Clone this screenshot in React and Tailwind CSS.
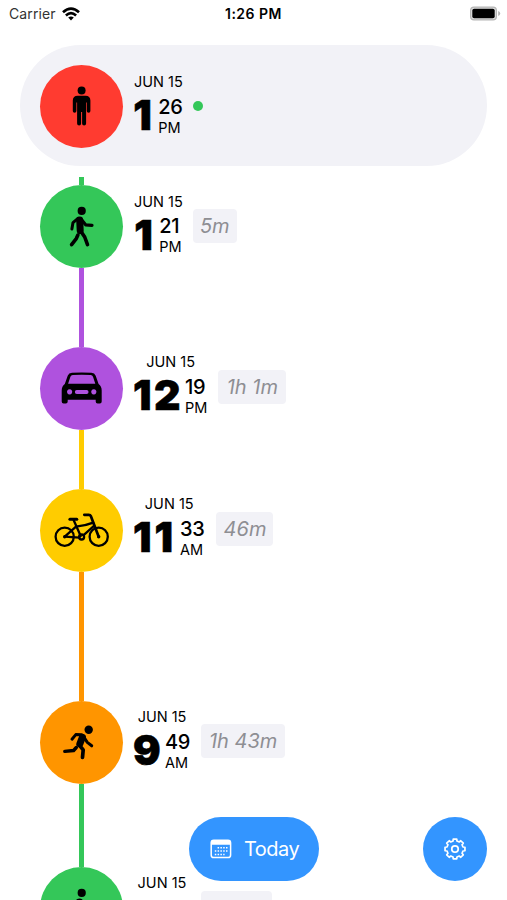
import React from "react";

const stroke = {
  fill: "none",
  stroke: "black",
  strokeLinecap: "round",
  strokeLinejoin: "round",
};

function StandIcon() {
  return (
    <svg viewBox="0 0 83 83" className="w-full h-full">
      <circle cx="41.6" cy="25.5" r="4" />
      <path d="M37.6 30.8h8c3 0 4.8 1.8 4.8 4.6v10.500a1.800 1.800 0 0 1-3.600 0V37.600h-.7v21a2 2 0 0 1-4 0V47h-1v11.600a2 2 0 0 1-4 0v-21h-.7v8.300a1.800 1.800 0 0 1-3.600 0V35.400c0-2.800 1.800-4.600 4.800-4.600z" />
    </svg>
  );
}

function WalkIcon() {
  return (
    <svg viewBox="0 0 83 83" className="w-full h-full">
      <circle cx="41.7" cy="25.9" r="4.100" />
      <path d="M39.700 35L40.200 45.500" {...stroke} strokeWidth="7" />
      <path d="M38 33.400L33 37.600L31.900 44" {...stroke} strokeWidth="3" />
      <path d="M41.800 35L45.600 39.800L52 40.400" {...stroke} strokeWidth="3.200" />
      <path d="M37.900 50L36.300 53.600L31.600 59.700" {...stroke} strokeWidth="3.600" />
      <path d="M41 46.500L44.700 52L47.500 59.600" {...stroke} strokeWidth="3.600" />
    </svg>
  );
}

function CarIcon() {
  return (
    <svg viewBox="0 0 83 83" className="w-full h-full">
      <path
        fillRule="evenodd"
        d="M32 25.700Q41.700 25.100 51.400 25.700Q54.600 25.900 55.700 28.700L58.600 37Q61.700 39.400 61.700 43.500V54.600Q61.700 56.500 59.800 56.500H57.600Q55.700 56.500 55.700 54.600V52.800H27.700V54.600Q27.700 56.500 25.800 56.500H23.600Q21.700 56.500 21.700 54.600V43.500Q21.700 39.400 24.800 37L27.700 28.700Q28.800 25.900 32 25.700ZM32.800 28Q31 28.200 30.400 29.800L28.100 36.700H55.300L53 29.800Q52.400 28.200 50.600 28Q41.700 27.500 32.800 28ZM29.600 42.300a2.600 2.600 0 1 0 .01 0ZM53.800 42.300a2.600 2.600 0 1 0 .01 0ZM36.800 43a1.950 1.950 0 0 0 0 3.900H46.600a1.950 1.950 0 0 0 0-3.900Z"
      />
    </svg>
  );
}

function BikeIcon() {
  return (
    <svg viewBox="0 0 83 83" className="w-full h-full">
      <g {...stroke} strokeWidth="2.300">
        <circle cx="24.700" cy="47.700" r="9.100" />
        <circle cx="58.700" cy="47.700" r="9.100" />
        <path d="M29.900 30.300H36.800" strokeWidth="3" />
        <path d="M33.600 31L40.700 47" />
        <path d="M44.300 25.800H48.800Q50.300 25.800 50.800 27L58.700 47.700" strokeWidth="2.700" />
        <path d="M36 37.700Q45 36.800 53.200 33.600M54 36.800L43.600 46.200M36 37.700L24.700 47.700L39.500 48.700" />
        <circle cx="41.600" cy="48" r="2.500" />
      </g>
      <circle cx="24.700" cy="47.700" r="1.700" />
      <circle cx="58.700" cy="47.700" r="1.700" />
    </svg>
  );
}

function RunIcon() {
  return (
    <svg viewBox="0 0 83 83" className="w-full h-full">
      <circle cx="48.700" cy="28.700" r="4.200" />
      <path d="M42.400 36.300L39.800 43" {...stroke} strokeWidth="7" />
      <path d="M41.700 33.700L35.800 33.600L32 38.200" {...stroke} strokeWidth="3" />
      <path d="M44.500 37L47.300 41.400L51.700 44.800" {...stroke} strokeWidth="3" />
      <path d="M39.500 44.300L43.200 48.800L42.500 56.300" {...stroke} strokeWidth="3.700" />
      <path d="M36.300 46.500L33.600 49.500L24.800 50.400" {...stroke} strokeWidth="3.400" />
    </svg>
  );
}

function CalendarIcon() {
  return (
    <svg viewBox="0 0 22 20" className="w-[22px] h-5">
      <rect x="1.200" y="1.200" width="19.400" height="17.400" rx="2.600" fill="none" stroke="white" strokeWidth="1.500" />
      <path d="M1 5.800V3.500Q1 1 3.500 1H18.300Q20.800 1 20.800 3.500V5.800Z" fill="white" />
      <g fill="none" stroke="white" strokeWidth="1.500" strokeDasharray="1.500 1.300">
        <path d="M7.600 8.700H17.500" />
        <path d="M4.800 12.100H17.500" />
        <path d="M4.800 15.500H14.600" />
      </g>
    </svg>
  );
}

// eight teeth, four corners each
const gearPoints = Array.from({ length: 32 }, (_, i) => {
  const tooth = Math.floor(i / 4) * 45;
  const [offset, r] = [[-14, 8.2], [-10, 10.1], [10, 10.1], [14, 8.2]][i % 4];
  const a = ((tooth + offset) * Math.PI) / 180;
  return `${(Math.sin(a) * r).toFixed(2)},${(-Math.cos(a) * r).toFixed(2)}`;
}).join(" ");

function GearIcon() {
  return (
    <svg viewBox="-12 -12 24 24" className="w-6 h-6">
      <g fill="none" stroke="white" strokeWidth="1.700" strokeLinejoin="round">
        <polygon points={gearPoints} />
        <circle r="3.200" strokeWidth="1.800" />
      </g>
    </svg>
  );
}

const current = {
  icon: StandIcon,
  color: "bg-[#ff3b30]",
  pad: "pt-[9px]",
  hour: "1",
  minute: "26",
  period: "PM",
};

const entries = [
  { icon: WalkIcon, color: "bg-[#34c759]", line: "h-2 bg-[#34c759]", pad: "pt-[8.5px]", hour: "1", minute: "21", period: "PM", duration: "5m", badge: "-ml-px mt-6 w-11" },
  { icon: CarIcon, color: "bg-[#af52de]", line: "h-[79px] bg-[#af52de]", pad: "pt-[7px]", hour: "12", minute: "19", period: "PM", duration: "1h 1m", badge: "mt-[22.5px] w-[68px]" },
  { icon: BikeIcon, color: "bg-[#ffcc00]", line: "h-[59px] bg-[#ffcc00]", pad: "pt-[7px]", hour: "11", minute: "33", period: "AM", duration: "46m", badge: "ml-px mt-[23px] w-[57px]" },
  { icon: RunIcon, color: "bg-[#ff9500]", line: "h-[129px] bg-[#ff9500]", pad: "pt-2", hour: "9", minute: "49", period: "AM", duration: "1h 43m", badge: "mt-[23px] w-[84px]" },
  { icon: WalkIcon, color: "bg-[#34c759]", line: "h-[83px] bg-[#34c759]", pad: "pt-2", badge: "mt-6 w-[71px]" },
];

const hourWidths = {
  1: "w-[20px] tracking-[1px]",
  12: "w-[47px] tracking-[2.5px]",
  11: "w-[42px] tracking-[3px]",
  9: "w-[27px] tracking-[1px]",
};

function Entry({ entry, children }) {
  const Icon = entry.icon;
  return (
    <div className="flex h-[83px]">
      <div className={`w-[83px] h-[83px] shrink-0 rounded-full ${entry.color}`}>
        <Icon />
      </div>
      <div className={`ml-[11px] mr-[11px] flex flex-col items-center ${entry.pad} ${entry.hour ? "" : "w-14"}`}>
        <div className="text-[14.5px] leading-4 whitespace-nowrap">JUN 15</div>
        {entry.hour && (
          <div className="flex mt-[5px] gap-1">
            <div className={`-indent-px text-[41px] leading-[40px] font-black [-webkit-text-stroke:0.6px_black] ${hourWidths[entry.hour]}`}>
              {entry.hour}
            </div>
            <div className="pt-[1.5px]">
              <div className="text-[20px] leading-5 font-medium tracking-[-0.3px]">{entry.minute}</div>
              <div className="text-[14.5px] leading-4 mt-[3px]">{entry.period}</div>
            </div>
          </div>
        )}
      </div>
      {children}
    </div>
  );
}

export default function App() {
  return (
    <div className="relative w-[507px] h-[900px] overflow-hidden bg-white text-black font-['Inter',sans-serif]">
      <header className="h-[45px] pt-[5px] pl-[9px] pr-[6px] grid grid-cols-3 items-start leading-[18px]">
        <div className="flex items-center gap-[6px] text-[14px] tracking-[0.1px] text-[#333]">
          Carrier
          <svg viewBox="0 0 18 14" className="w-[18px] h-[14px]">
            <g fill="none" stroke="black" strokeWidth="2.700">
              <path d="M1 5.200Q9 -1.900 17 5.200" />
              <path d="M3.900 8.400Q9 4 14.100 8.400" />
            </g>
            <path d="M6.200 10.600Q9 8.300 11.800 10.600L9 13.600Z" />
          </svg>
        </div>
        <div className="-ml-[3px] text-center text-[14px] font-semibold tracking-[0.5px]">1:26 PM</div>
        <div className="flex justify-end pt-px">
          <svg viewBox="0 0 32 15" className="w-8 h-[15px]">
            <rect x="1" y="0.500" width="27" height="14" rx="4" fill="#b5b5b5" />
            <rect x="2.200" y="1.700" width="24.600" height="11.600" rx="3" fill="#e0e0e0" />
            <rect x="3.300" y="2.800" width="22.400" height="9.400" rx="1.800" />
            <path d="M29.200 5Q31.200 5.700 31.200 7.500T29.200 10Z" fill="#b5b5b5" />
          </svg>
        </div>
      </header>

      <section className="ml-5 w-[467px] h-[121px] pl-5 pt-5 rounded-full bg-[#f2f2f7]">
        <Entry entry={current}>
          <span className="-ml-px mt-[36px] w-[10px] h-[10px] rounded-full bg-[#34c759]" />
        </Entry>
      </section>

      <main className="pl-10 mt-[11px]">
        {entries.map((entry, i) => (
          <div key={i}>
            <div className={`ml-[39px] w-[5px] ${entry.line}`} />
            <Entry entry={entry}>
              <div
                className={`h-[34px] rounded flex items-center justify-center bg-[#f2f2f7] text-[#8e8e93] text-[20px] italic whitespace-nowrap ${entry.badge}`}
              >
                {entry.duration}
              </div>
            </Entry>
          </div>
        ))}
      </main>

      <button className="absolute left-[189px] top-[816.5px] w-[130px] h-16 rounded-full bg-[#3395ff] text-white flex items-center pl-[21px] gap-3">
        <CalendarIcon />
        <span className="text-[20px] tracking-[-0.5px]">Today</span>
      </button>
      <button className="absolute left-[423px] top-[816.5px] w-16 h-16 rounded-full bg-[#3395ff] flex items-center justify-center">
        <GearIcon />
      </button>
    </div>
  );
}
